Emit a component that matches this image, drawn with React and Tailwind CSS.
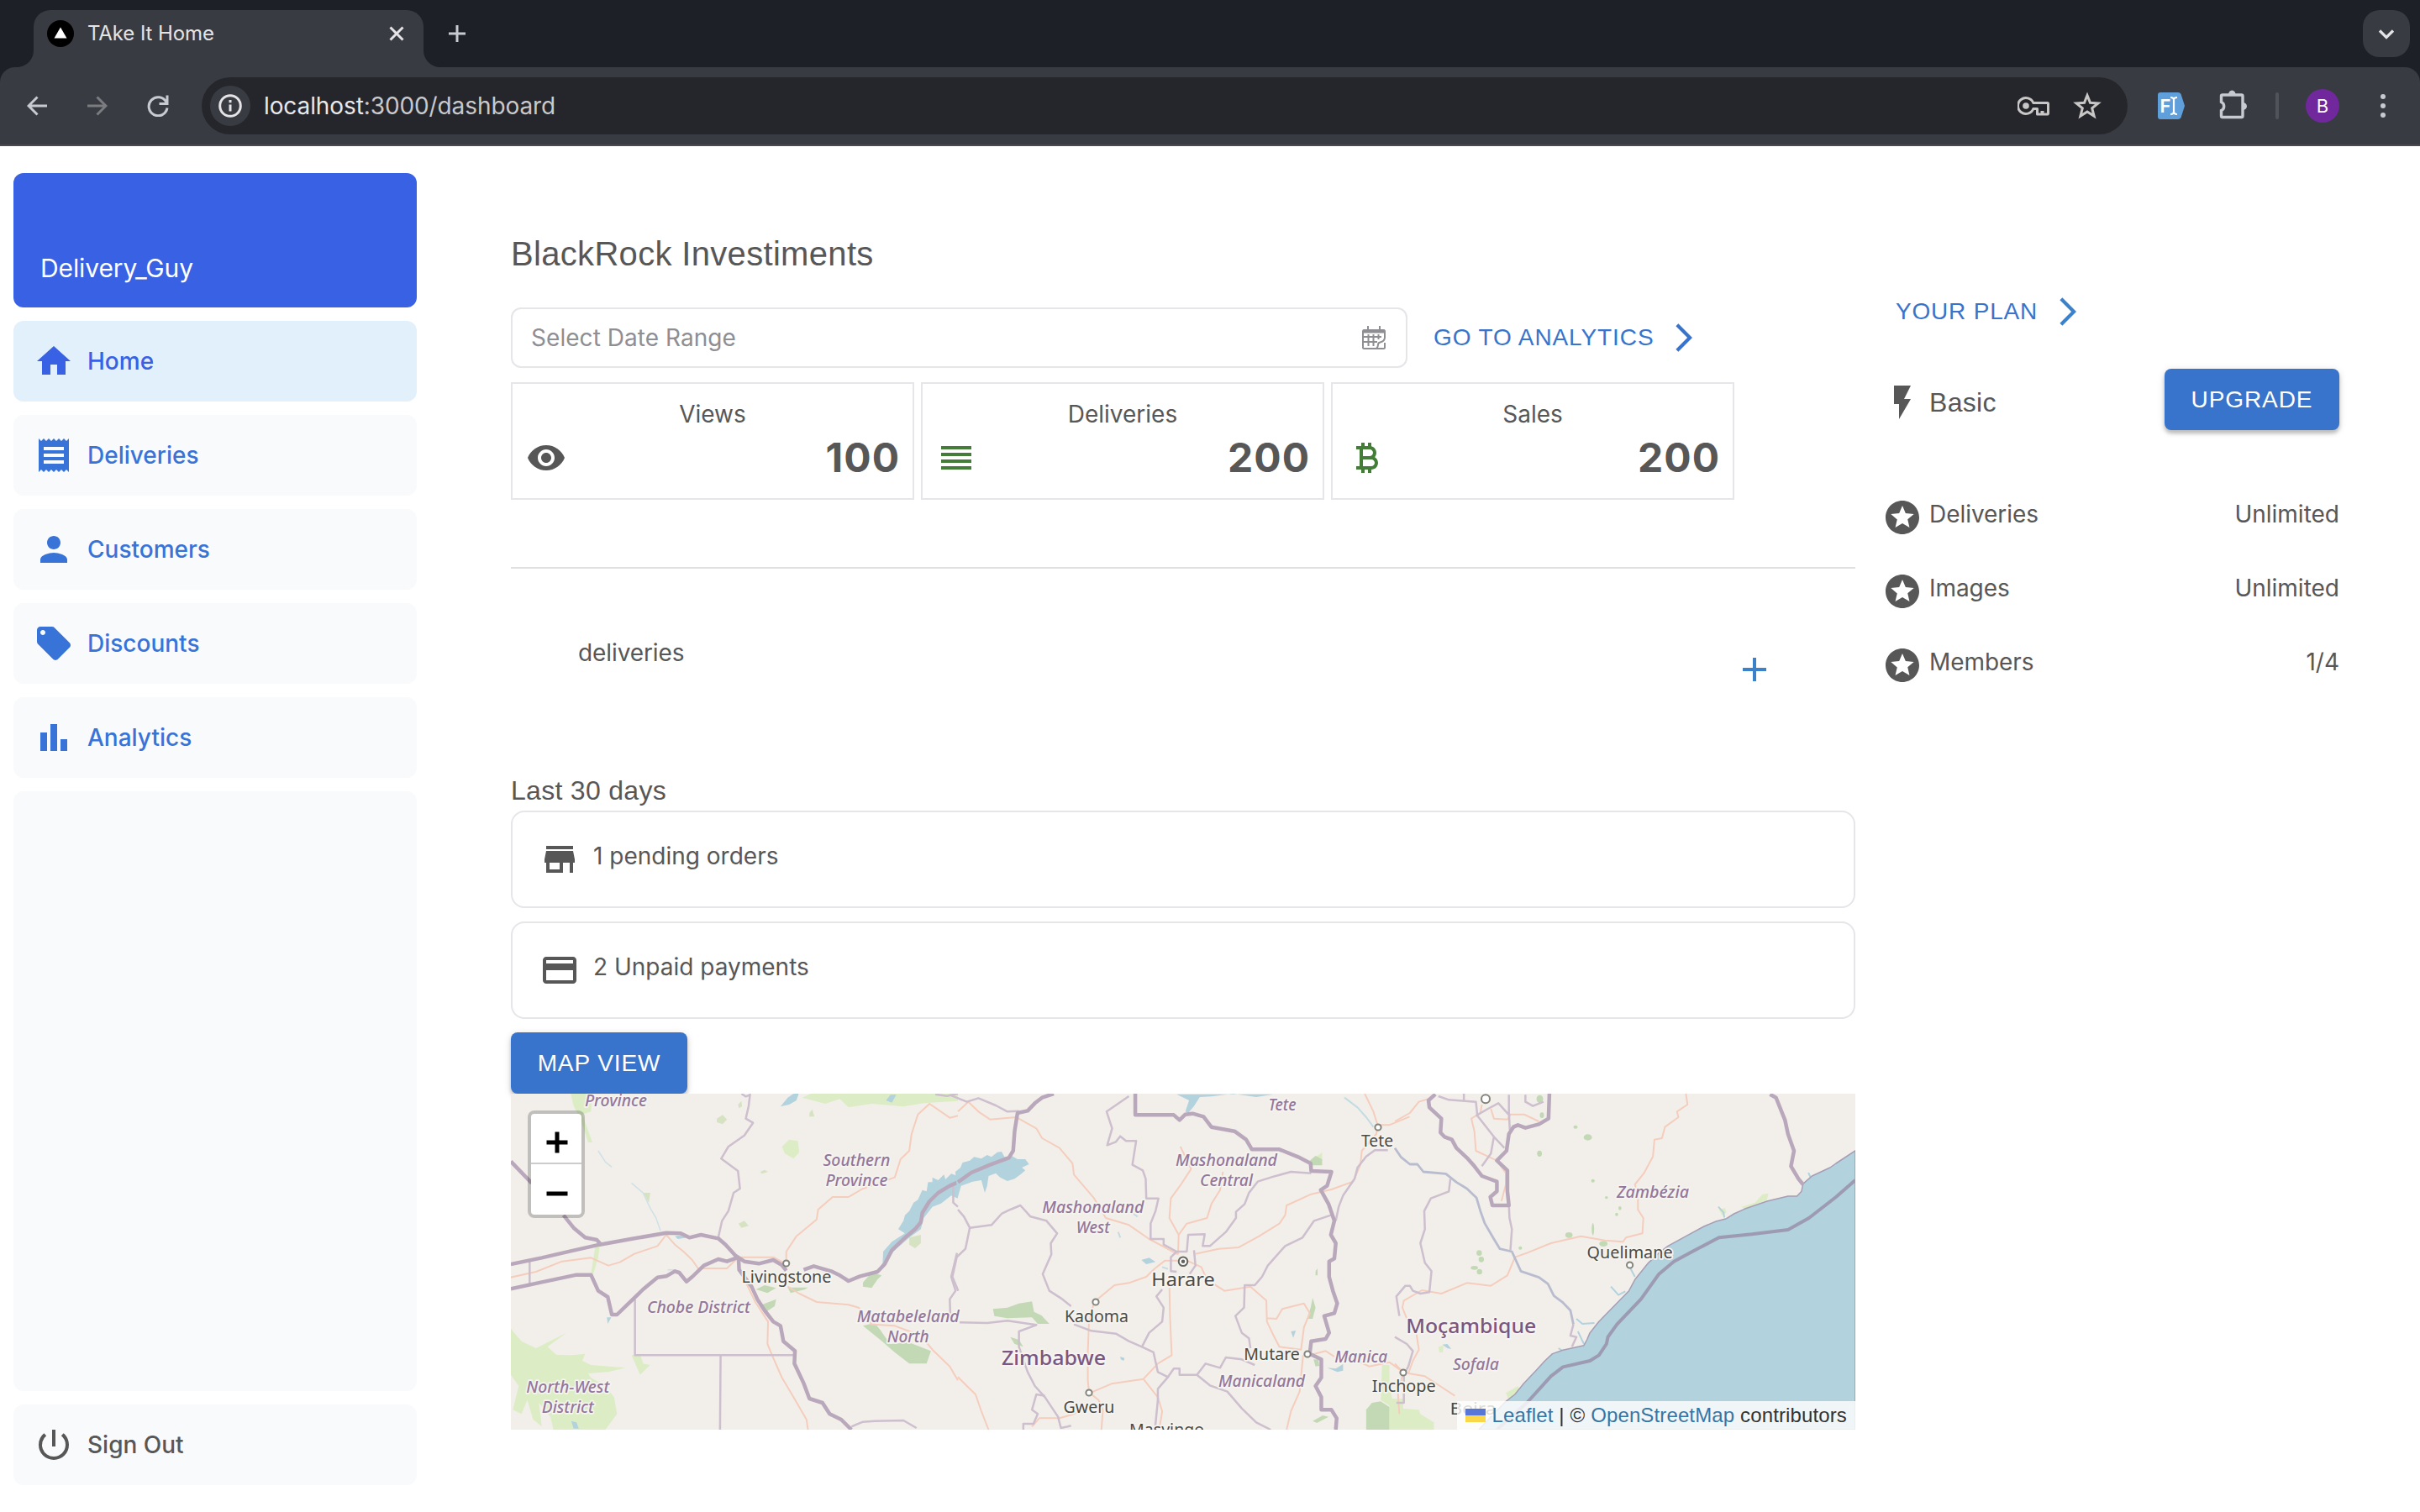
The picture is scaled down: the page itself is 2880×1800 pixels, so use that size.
import React from "react";
import {
  MdAdd,
  MdArrowForwardIos,
  MdBarChart,
  MdCreditCard,
  MdCurrencyBitcoin,
  MdFlashOn,
  MdHome,
  MdPerson,
  MdPowerSettingsNew,
  MdReceipt,
  MdReorder,
  MdLocalOffer,
  MdStars,
  MdStore,
  MdVisibility,
} from "react-icons/md";

const navItems = [
  { label: "Home", Icon: MdHome, active: true },
  { label: "Deliveries", Icon: MdReceipt },
  { label: "Customers", Icon: MdPerson },
  { label: "Discounts", Icon: MdLocalOffer },
  { label: "Analytics", Icon: MdBarChart },
];

const stats = [
  { label: "Views", value: "100", Icon: MdVisibility, color: "text-[#575757]" },
  { label: "Deliveries", value: "200", Icon: MdReorder, color: "text-[#447d38]" },
  { label: "Sales", value: "200", Icon: MdCurrencyBitcoin, color: "text-[#447d38]" },
];

const features = [
  { label: "Deliveries", value: "Unlimited" },
  { label: "Images", value: "Unlimited" },
  { label: "Members", value: "1/4" },
];

/* ---------- Browser chrome ---------- */

function BrowserChrome() {
  return (
    <header className="h-[174px] bg-[#1e2028]">
      <div className="flex h-20 items-center justify-between pr-3">
        <div className="flex h-20 items-end">
          <svg className="ml-5 h-5 w-5 text-[#393b42]" viewBox="0 0 20 20" fill="currentColor">
            <path d="M20 0v20H0C11 20 20 11 20 0z" />
          </svg>
          <div className="flex h-[68px] w-[464px] items-center rounded-t-[20px] bg-[#393b42] pb-3 pl-4 pr-5">
            <svg className="h-8 w-8" viewBox="0 0 32 32">
              <circle cx="16" cy="16" r="16" fill="#000" />
              <path d="M16 8.500l7.500 13h-15z" fill="#fff" />
            </svg>
            <span className="ml-4 text-2xl leading-8 tracking-[-0.1px] text-[#e4e4e6]">TAke It Home</span>
            <svg className="ml-auto mr-[3px] h-[18px] w-[18px]" viewBox="0 0 18 18" fill="none" stroke="#e4e4e6" strokeWidth="3">
              <path d="M1.500 1.500l15 15M16.500 1.500l-15 15" />
            </svg>
          </div>
          <svg className="h-5 w-5 text-[#393b42]" viewBox="0 0 20 20" fill="currentColor">
            <path d="M0 0v20h20C9 20 0 11 0 0z" />
          </svg>
          <svg className="mb-[30px] ml-[10px] h-5 w-5" viewBox="0 0 20 20" fill="none" stroke="#c7cad1" strokeWidth="3">
            <path d="M10 0v20M0 10h20" />
          </svg>
        </div>
        <div className="flex h-14 w-14 items-center justify-center rounded-[20px] bg-[#393b42]">
          <svg className="h-6 w-6" viewBox="0 0 24 24" fill="none" stroke="#e4e4e6" strokeWidth="3.200">
            <path d="M4 8.500l8 8 8-8" />
          </svg>
        </div>
      </div>
      <div className="flex h-[94px] items-center rounded-t-[18px] border-b-2 border-[#4a4a4c] bg-[#393b42] pl-8">
        <svg className="h-6 w-6" viewBox="0 0 24 24" fill="none" stroke="#c7cad1" strokeWidth="3">
          <path d="M24.500 12H2.500M12.500 1.500L2 12l10.500 10.500" />
        </svg>
        <svg className="ml-12 h-6 w-6" viewBox="0 0 24 24" fill="none" stroke="#7b7c80" strokeWidth="3">
          <path d="M-.5 12h22M11.500 1.500L22 12 11.500 22.500" />
        </svg>
        <svg className="ml-[47px] h-[26px] w-[26px]" viewBox="0 0 26 26" fill="none" stroke="#c7cad1" strokeWidth="3">
          <path d="M22.800 8.500A11 11 0 1 0 24 15.500M24 .5v10h-9.500" />
        </svg>
        <div className="ml-[39px] flex h-[68px] w-[2292px] items-center rounded-full bg-[#25262b] pl-[10px] pr-[30px]">
          <div className="flex h-12 w-12 items-center justify-center rounded-full bg-[#393b42]">
            <svg className="h-7 w-7" viewBox="0 0 28 28" fill="none" stroke="#e4e4e6" strokeWidth="3">
              <circle cx="14" cy="14" r="12.300" />
              <path d="M14 12.500v8M14 7v3.200" />
            </svg>
          </div>
          <span className="ml-4 text-[28px] leading-9 tracking-[-0.1px] text-[#c9c9cb]">
            <span className="text-[#e8e8ea]">localhost</span>:3000/dashboard
          </span>
          <svg className="ml-auto h-6 w-[38px]" viewBox="0 0 38 24" fill="none" stroke="#c9c7c5" strokeWidth="3">
            <path d="M18.800 8.500A9.500 9.500 0 1 0 18.800 15.500H23.500V22H35.300A1 1 0 0 0 36.500 21V9.500A1 1 0 0 0 35.500 8.500z" strokeLinejoin="round" />
            <path d="M29.500 22v-4" strokeWidth="4" />
            <circle cx="10" cy="12" r="3.800" fill="#c9c7c5" stroke="none" />
          </svg>
          <svg className="ml-[27px] h-9 w-9" viewBox="0 0 36 36" fill="none" stroke="#c9c7c5" strokeWidth="3">
            <path d="M18 5.500l3.500 8.700 9.500.7-7.300 6 2.400 9.200L18 25l-8.100 5.100 2.400-9.200-7.300-6 9.500-.7z" />
          </svg>
        </div>
        <svg className="ml-9 h-8 w-8" viewBox="0 0 32 32">
          <path d="M3 0h21a4 4 0 0 1 3.500 2L32 16l-4.500 14a4 4 0 0 1-3.500 2H3a3 3 0 0 1-3-3V3a3 3 0 0 1 3-3z" fill="#5f9fdb" />
          <text x="2.500" y="24" fill="#fff" fontSize="22" fontWeight="600" fontFamily="Inter, sans-serif">F</text>
          <path d="M15 6c3 0 4 1 4 3v14c0 2-1 3-4 3M23 6c-3 0-4 1-4 3M19 23c0 2 1 3 4 3" fill="none" stroke="#fff" strokeWidth="2.200" />
        </svg>
        <svg className="mb-1 ml-10 h-[38px] w-9" viewBox="0 0 36 38" fill="none" stroke="#c7cad1" strokeWidth="3.400">
          <path d="M5 8h22.500a1.500 1.500 0 0 1 1.500 1.500V33a1.500 1.500 0 0 1-1.500 1.500H5A1.500 1.500 0 0 1 3.500 33v-6.500a5.500 5.500 0 0 0 0-10V9.500A1.500 1.500 0 0 1 5 8z" />
          <path d="M12 8a4.300 5.500 0 0 1 8.600 0zM29 17a5 4.500 0 0 1 0 9z" fill="#c7cad1" stroke="none" />
        </svg>
        <div className="ml-8 h-8 w-1 rounded-full bg-[#51535b]" />
        <div className="ml-8 flex h-10 w-10 items-center justify-center rounded-full bg-[#70289c] text-[22px] leading-none text-white">B</div>
        <svg className="ml-12 h-8 w-2" viewBox="0 0 8 32" fill="#c7cad1">
          <circle cx="4" cy="5" r="3" />
          <circle cx="4" cy="16" r="3" />
          <circle cx="4" cy="27" r="3" />
        </svg>
      </div>
    </header>
  );
}

/* ---------- Sidebar ---------- */

function Sidebar() {
  return (
    <aside className="flex h-[1562px] w-[480px] shrink-0 flex-col gap-4">
      <div className="flex h-40 items-end rounded-xl bg-[#3861e4] px-8 pb-[25px] text-[30px] leading-[44px] tracking-[-0.1px] text-white">
        Delivery_Guy
      </div>
      {navItems.map(({ label, Icon, active }) => (
        <a
          key={label}
          className={
            active
              ? "flex h-24 items-center gap-4 rounded-xl bg-[#e2f0fc] px-6 text-[28px] font-medium text-[#3861e4]"
              : "flex h-24 items-center gap-4 rounded-xl bg-[#f9fafc] px-6 text-[28px] font-medium text-[#3874d8]"
          }
        >
          <Icon className="h-12 w-12" />
          {label}
        </a>
      ))}
      <div className="grow rounded-xl bg-[#f9fafc]" />
      <a className="flex h-24 items-center gap-4 rounded-xl bg-[#f9fafc] px-6 text-[28px] font-medium text-[#575757]">
        <MdPowerSettingsNew className="h-12 w-12" />
        Sign Out
      </a>
    </aside>
  );
}

/* ---------- Main column ---------- */

function CalendarIcon() {
  return (
    <svg className="h-7 w-7" viewBox="0 0 28 28" fill="none" stroke="#8e8e93" strokeWidth="2">
      <path d="M27 14V6.500A1.500 1.500 0 0 0 25.500 5h-23A1.500 1.500 0 0 0 1 6.500v19A1.500 1.500 0 0 0 2.500 27h23a1.500 1.500 0 0 0 1.500-1.500V20" />
      <path d="M7 0v6M21 0v6" />
      <path d="M1 6.500h26" strokeWidth="4" />
      <path d="M1 13h22M1 19h17M7.500 10v14M13.500 10v14M19.500 10v6" />
      <path d="M27 13.500c0 4-3 5.500-5.500 6-2 .4-2.500 1.500-2.500 3 0 2-1 3.500-2 4.500" />
    </svg>
  );
}

function StatCard({ label, value, Icon, color }) {
  return (
    <div className="h-[140px] w-[480px] border-2 border-[#e5e5ea] px-4 pt-4">
      <div className="text-center text-[28px] leading-10">{label}</div>
      <div className="flex h-[62px] items-center justify-between pt-px">
        <Icon className={`h-12 w-12 ${color}`} />
        <span className="-mr-px text-5xl font-bold leading-[54px] tracking-[1px]">{value}</span>
      </div>
    </div>
  );
}

function NoticeRow({ Icon, children }) {
  return (
    <div className="flex h-[116px] items-center gap-4 rounded-2xl border-2 border-[#e5e5ea] px-8">
      <Icon className="h-12 w-12" />
      <span className="mb-[9px] text-[28px] leading-10">{children}</span>
    </div>
  );
}

const wideBordersA = [
  "M23 645L130 622L230 598L330 575L450 553L560 533L610 535L640 550L680 540L740 553L765 575L800 615L830 635L880 643L930 630L960 648L975 668",
  "M1035 665L1070 652L1130 670L1160 685L1190 705L1230 688L1290 672L1315 645L1340 595L1380 555L1420 520L1440 495L1445 462L1470 420L1500 390L1540 365L1568 352",
  "M23 278L95 355M205 470L240 515L280 550L320 558L335 575",
  "M23 733L130 709L250 683H300L325 740L358 762L372 825L390 825L440 775L480 735L530 692L560 688L590 670L605 675L630 707L650 690L690 650L740 627L770 635L810 620",
  "M810 625L812 665L855 725L875 770L900 810L930 850L955 865L965 920L1005 955L1003 1000L1035 1070L1055 1125L1100 1140L1125 1180L1165 1200L1200 1236",
];
const thinBordersA = [
  "M850 36L845 80L835 125L860 140L830 185L775 225L750 268L808 312L815 375L793 390L775 455L753 490L740 550",
  "M452 770V970H1005M748 970L746 1236M88 635V715",
  "M1552 365V425L1568 440M1565 605L1545 690L1560 740L1540 770L1542 830",
  "M1200 1225L1240 1208L1280 1205L1380 1203L1425 1230",
  "M820 36L835 46L850 40M1490 38L1530 44L1568 36",
];
const roadsA = [
  "M23 692L110 672L200 635L300 622L360 650L400 638L450 608L530 580L560 540L590 575L620 600L650 630L670 660H770L805 625",
  "M810 620H930L975 645V600L1010 545L1045 515L1080 485L1085 450L1135 405L1190 405L1240 375L1350 335L1370 270L1400 240L1408 180L1430 110L1470 72L1540 122L1568 115",
  "M980 725L1020 750L1080 780L1190 790L1225 800L1270 860L1350 865L1440 900L1480 950L1540 1010L1568 1060",
  "M812 660L868 780L912 850L910 930L930 980L960 1050L1000 1120L1045 1200L1050 1236",
];
const lightGreenA = [
  "M23 875L60 920L110 945L215 890L150 940L180 968L230 970L280 965L270 990L300 1005L420 1015L360 1030L290 1035L300 1050L350 1080L380 1120L390 1180L350 1236H170L160 1190L120 1140L130 1225L100 1200L80 1130L60 1180L30 1165L50 1080L23 1040Z",
  "M230 36H305L300 100L270 110L305 210L290 210L265 130L240 80Z",
  "M1030 50L1060 36H1568V62L1450 70L1380 82L1270 72L1190 85L1160 55L1110 72Z",
  "M960 225L985 200L1015 205L1020 245L1000 268L970 250Z",
  "M315 580L330 580L325 620L308 680L300 680Z",
  "M440 970L470 965L480 1000L505 1005L470 1040Z",
];
const darkGreenA = [
  "M870 735L900 720L940 730L910 748Z",
  "M890 790L940 770L935 795L905 815Z",
  "M980 728L1050 728L1040 735L990 748Z",
  "M1240 725L1240 710L1270 675L1305 685L1290 700L1270 730Z",
  "M1240 865L1280 855L1300 880L1320 910L1335 930L1400 925L1475 955L1460 1000H1400L1350 960L1300 915L1270 890Z",
];
const paleGreenA = [
  "M1400 550L1440 540V570L1420 588L1400 575Z",
  "M480 390H505L500 425Z",
  "M735 125L755 112L770 128L755 145L735 138Z",
  "M810 500L830 490L845 508L820 515Z",
  "M1055 105L1065 92L1072 118H1055Z",
  "M885 315L900 308L912 315L890 322Z",
  "M808 75L820 62L822 82L812 88Z",
];
const waterA = [
  "M1290 672L1308 640L1310 600L1340 565L1385 535L1362 520L1380 490L1385 470L1400 455L1415 425L1430 415L1445 380L1460 385L1465 352L1480 352L1480 335L1500 345L1520 325L1525 342L1545 322L1568 330V410L1545 400L1510 428L1480 440L1450 480L1440 520L1400 550L1345 600L1318 645Z",
  "M955 82L980 50L1000 36H1018L1010 60L985 75Z",
  "M1320 60L1335 40H1355L1340 68Z",
  "M590 545L620 540L635 550L600 555Z",
  "M355 835L370 835L358 858Z",
  "M232 1205L250 1210L258 1232H240Z",
];

const wideBordersB = [
  "M29 352L75 318L140 290L205 265L220 240L225 170L235 105L270 97L295 70L320 50L360 36",
  "M642 36V112H775L795 130L815 110L840 107L878 118L905 155L985 170L1025 200L1045 235H1140L1205 262L1248 285L1250 312L1320 315L1305 365L1283 380L1310 430L1320 460L1330 490L1318 540L1335 570L1330 625L1312 635V690L1325 740L1340 785L1330 820L1295 830L1312 890L1300 912L1250 920L1245 965L1285 985V1050L1265 1080L1285 1120V1165H1320L1338 1195L1335 1236",
];
const thinBordersB = [
  "M620 45L543 100L562 160L545 220L575 208L590 188L610 205H645L632 290L668 310L678 340L680 410H722L712 455L695 500V555H740L740 575L785 600H820L825 540L882 538L875 580H900L955 530L990 480V458L1020 430L1035 390L1065 350L1120 332L1180 315L1250 320",
  "M0 40L60 65L100 52L160 78L200 100L240 98",
  "M29 450L50 475L70 515L55 590L25 620L10 690L30 740",
  "M70 515L145 505L180 465L210 450L245 435L280 475L335 490L372 535L350 570L352 610L322 680L345 740L390 770L420 795",
  "M35 853L130 855L200 847L300 862L240 885L240 940L270 1030L295 1080L330 1120L375 1190L385 1230L420 1222",
  "M430 860L490 883L575 893L620 920L665 940L705 960L720 1030L755 1048L720 1090L720 1130L710 1236",
  "M665 940L690 890L735 850L740 800L715 760L735 735",
  "M755 1048L775 1018H795V1040H855L885 1000L935 1015L955 978L1010 985L1055 1005",
  "M1318 470L1260 490L1220 550L1160 580L1100 650L1080 690L1055 720H1020L1018 800L988 830L1010 890L1035 910L1040 945",
  "M855 1040L900 1078L960 1100L1010 1160L1060 1210L1110 1236",
  "M1335 490L1345 440L1360 400L1400 340L1410 300L1440 260L1470 238H1515",
  "M785 600L765 620V670L785 672M845 595L850 650L830 680",
  "M330 1115L300 1110L285 1165L305 1180L290 1215H255V1236",
];
const roadsB = [
  "M29 100L65 65L100 100L140 128L230 120L300 160L320 195L380 230L425 285L430 325L500 410L540 480L620 505L690 555L790 610",
  "M808 632H745L710 660L680 690L620 712L570 720L500 780L482 850L478 960V1060L482 1100",
  "M798 225L835 305L800 360L765 410L760 480L792 540L790 610",
  "M945 315L935 380L905 430L890 480L820 500L792 540",
  "M850 608L930 590L1000 585L1070 545L1140 500L1160 470L1165 435L1250 395L1320 378L1395 350L1420 290L1425 240L1475 180L1480 150L1465 100L1435 36",
  "M820 632L870 655L890 700L950 740L1040 725L1095 775L1097 850L1120 900L1140 940L1215 950L1225 870L1245 820L1225 785L1150 805L1130 840L1097 838",
  "M760 730L762 830L768 970L720 1000L670 1055L560 1072L485 1105L515 1130L530 1165L525 1236",
  "M670 1055L720 1120L735 1170L725 1236M1222 970L1210 1100L1180 1170L1165 1236",
  "M29 1048L60 1080L90 1110L110 1170L135 1236M480 1150L430 1180L380 1195H310L285 1225",
  "M1245 970L1300 955L1330 975M1410 990L1450 1010L1520 995L1568 1030M1480 148H1520L1590 118",
];
const lightGreenB = ["M1495 1005H1520V1080L1530 1125H1568V1236H1520V1150L1490 1130Z", "M1265 262L1288 246V270Z"];
const darkGreenB = [
  "M150 805L200 800L240 785L285 778L292 815L318 828L345 858H305L285 835L200 838L155 830Z",
  "M210 905L240 915L255 940L225 930Z",
  "M1245 275L1265 258L1288 270V292H1250Z",
  "M1248 800L1255 765L1265 800L1255 840H1235Z",
  "M1440 1236V1165L1460 1140L1490 1135L1520 1155V1236Z",
  "M1255 1205L1290 1185L1310 1190L1270 1212Z",
  "M1265 670L1272 660V685H1265ZM1258 985H1275L1278 1008L1265 1010Z",
];
const waterB = [
  "M20 315L38 300L45 282L70 275L85 262L110 268L130 255L145 262L165 245L180 243L190 262L215 258L235 270L262 270L275 288L250 300L262 310L245 325L225 340L200 348L175 335L160 320L135 330L130 365L122 390L110 345L80 350L40 365L29 405Z",
  "M663 630L690 622L712 637L680 645Z",
  "M785 38H1120L1060 48L980 36L905 46L865 48L845 80L825 105L815 100L828 60Z",
  "M1305 1015L1335 1018L1360 1002V1025L1340 1030Z",
  "M1180 885L1197 882L1188 908Z",
  "M590 975L605 980L602 990L592 985Z",
];

const seaC =
  "M1534 240L1470 285L1450 300L1390 330L1360 358L1355 385L1340 402L1310 402L1240 420L1165 448L1130 465L1105 482L1070 492L1030 510L970 545L910 580L880 605L845 640L800 700L780 740L730 795L680 850L650 890L640 915L630 935L560 952L525 965L500 990L470 1025L430 1070L400 1110L370 1135L320 1190L280 1236H1534Z";
const seaBorderC =
  "M1534 345L1470 405L1380 480L1310 522L1190 538L1080 550L1000 595L930 635L880 680L850 725L820 770L740 860L710 905L705 930L680 970L650 990L560 1012L520 1045L440 1140L340 1236";
const wideBordersC = [
  "M135 38L112 60L115 85L155 125L152 175L165 190L190 200L205 230L240 265L265 295L290 330L340 350V385L318 405L325 435H380L375 385V310L340 275L372 240L380 180L395 155L410 148L435 158L480 145L512 125L515 36",
  "M1250 38L1270 50L1300 130L1310 180L1330 240L1320 295L1345 340L1360 360",
];
const riverC =
  "M0 230L20 262L50 288L75 288L95 315L170 322L205 352L240 375L272 408L285 455L300 500L330 555L350 590L390 600L420 670L480 692L510 715L530 758L560 782L585 810L595 860";
const thinBordersC = [
  "M380 435L382 480L390 520L385 595M595 860L585 900L605 905L590 940",
  "M185 340L180 385L120 410L98 455L100 520L85 570L100 640L122 670L115 745L85 750L60 740L50 722H35L5 760L15 830",
  "M0 905L40 930L60 955L45 1010L30 1040V1140H5",
  "M145 45L180 58L270 65L275 115L330 190L365 230M380 40V100L383 165M330 190L320 250L290 295M435 40V65L460 80L495 65M270 115L310 90L345 70L383 115M230 60V36",
];
const roadsC = [
  "M0 135L50 105L80 65L110 55",
  "M970 36L975 75L940 100L945 120L900 155L890 195L865 200L860 260L830 320L800 360L810 400V450L828 480L825 535L770 550L760 565L700 560L620 545L520 570L440 605L400 620L375 685L320 722L240 712L155 750L90 738L30 775L25 800L40 840L70 880L80 950L60 990L45 1035L100 1045L150 1080L200 1115",
  "M290 75L285 105L255 125L265 170L270 240L340 275L370 320L370 360L355 420",
  "M320 90L330 125L375 128L385 110H430L480 135M0 1000L28 1032L10 1100L15 1180",
];
const darkGreenC = [
  [643, 192, 14, 11], [660, 520, 4, 22], [580, 541, 12, 10], [695, 572, 14, 10], [602, 155, 7, 6],
  [482, 250, 8, 11], [281, 605, 9, 10], [288, 628, 9, 10], [265, 658, 12, 7], [282, 672, 9, 10],
  [660, 347, 6, 6], [750, 445, 5, 7], [739, 467, 5, 6], [705, 407, 5, 5], [483, 55, 11, 14], [490, 113, 7, 10], [418, 587, 6, 6],
];
const lightGreenC = [
  "M1155 440L1200 425L1225 395L1245 392L1240 415L1165 448Z",
  "M370 1105L410 1080L415 1095L380 1130Z",
  "M0 1236V1185L20 1160L80 1165L85 1180L130 1210V1236Z",
  "M1080 450L1100 445L1105 460L1090 470Z",
  "M145 940L162 935L160 960H148Z",
];
const streamsC = "M1378 318L1385 335L1380 345M1078 440L1095 460L1098 478M785 660L800 690M720 725L745 755L768 742M605 840L625 858L665 855M610 885L630 930M545 945L560 955";

const labels = [
  ["Province", 124.9, 14.7, 74, "i"], ["Southern", 411.4, 85.7, 80, "i"], ["Province", 411.4, 109.7, 74, "i"],
  ["Livingstone", 328, 225, 107, "c"], ["Chobe District", 223.4, 261, 123, "i"], ["Matabeleland", 472.7, 271.5, 122, "i"],
  ["North", 472.7, 295.5, 50, "i"], ["North-West", 67.8, 355.7, 99, "i"], ["District", 67.8, 379.7, 62, "i"],
  ["Tete", 918, 19.7, 33, "i"], ["Tete", 1031, 63, 38, "c"], ["Mashonaland", 851.5, 86.3, 121, "i"], ["Central", 851.5, 110.3, 63, "i"],
  ["Mashonaland", 692.8, 141.7, 121, "i"], ["West", 692.8, 165.7, 40, "i"], ["Harare", 800, 228.7, 75.5, "h"], ["Kadoma", 697, 271.7, 76, "c"],
  ["Zimbabwe", 646, 323, 124, "n"], ["Gweru", 688, 379.7, 61, "c"], ["Masvingo", 780.6, 407, 89, "c"], ["Mutare", 905.6, 316.7, 66.5, "c"],
  ["Manica", 1011.7, 319.7, 63, "i"], ["Manicaland", 893.6, 349, 103, "i"], ["Zambézia", 1359, 124.3, 86, "i"],
  ["Quelimane", 1331.6, 196, 102, "c"], ["Moçambique", 1142.7, 284.7, 155, "n"], ["Sofala", 1148.4, 328.7, 55, "i"],
  ["Inchope", 1062.7, 355.3, 76, "c"], ["Beira", 1145, 382, 55, "c"],
];
const labelStyles = {
  i: { fill: "#93779a", fontSize: 20.500, fontStyle: "italic", fontWeight: 500 },
  c: { fill: "#4a4a46", fontSize: 20 },
  h: { fill: "#4a4a46", fontSize: 22 },
  n: { fill: "#7a5680", fontSize: 23, fontWeight: 500 },
};
const towns = [[327.700, 202], [696, 248], [688, 356], [1032, 40], [948, 310], [1062, 332], [1331.600, 204]];

function Lines({ paths, color, width }) {
  return (
    <g fill="none" stroke={color} strokeWidth={width} strokeLinejoin="round">
      {paths.map((d) => (
        <path key={d} d={d} vectorEffect="non-scaling-stroke" />
      ))}
    </g>
  );
}

function Areas({ paths, color }) {
  return (
    <g fill={color}>
      {paths.map((d) => (
        <path key={d} d={d} />
      ))}
    </g>
  );
}

const WIDE = "#b9a8bb";
const THIN = "#cdbfce";
const ROAD = "#f5cdbd";
const LIGHT = "#dcedc6";
const DARK = "#c3d9b5";
const WATER = "#b2d2dd";

function MapDrawing() {
  return (
    <svg className="block h-[400px] w-[1600px]" viewBox="0 0 1600 400">
      <rect width="1600" height="400" fill="#f2efea" />
      <g transform="translate(-8 -12) scale(0.34435 0.33333)">
        <Areas paths={lightGreenA} color={LIGHT} />
        <Areas paths={darkGreenA} color={DARK} />
        <Areas paths={paleGreenA} color="#d5e3c2" />
        <Areas paths={waterA} color={WATER} />
        <Lines paths={["M325 240L350 280L372 298M440 355L480 390L505 445L525 480L540 525M565 665L590 665"]} color="#cfe0e6" width={1.500} />
        <Lines paths={roadsA} color={ROAD} width={2} />
        <Lines paths={thinBordersA} color={THIN} width={2.500} />
        <Lines paths={wideBordersA} color={WIDE} width={4.500} />
      </g>
      <g transform="translate(522 -12) scale(0.34435 0.33333)">
        <Areas paths={lightGreenB} color={LIGHT} />
        <Areas paths={darkGreenB} color={DARK} />
        <Areas paths={waterB} color={WATER} />
        <Lines paths={["M1365 50L1410 85L1440 120L1465 155M735 655L755 662M635 465L650 475M583 530L590 550"]} color="#c3dbe2" width={2} />
        <Lines paths={roadsB} color={ROAD} width={2} />
        <Lines paths={thinBordersB} color={THIN} width={2.500} />
        <Lines paths={wideBordersB} color={WIDE} width={4.500} />
      </g>
      <g transform="translate(1052 -12) scale(0.35714 0.33333)">
        <Areas paths={lightGreenC} color={LIGHT} />
        <g fill={DARK}>
          {darkGreenC.map(([cx, cy, rx, ry]) => (
            <ellipse key={`${cx}-${cy}`} cx={cx} cy={cy} rx={rx} ry={ry} />
          ))}
        </g>
        <Areas paths={[seaC, "M158 932L175 930L188 948L175 945Z"]} color={WATER} />
        <Lines paths={[streamsC]} color={WATER} width={2} />
        <Lines paths={roadsC} color={ROAD} width={2} />
        <Lines paths={thinBordersC} color={THIN} width={2.500} />
        <Lines paths={[riverC]} color="#b9bccf" width={2.800} />
        <Lines paths={[seaC]} color="#a79db4" width={1.500} />
        <Lines paths={wideBordersC} color={WIDE} width={4.500} />
        <Lines paths={[seaBorderC]} color="#9d9bb3" width={4} />
      </g>
      <g fill="#fff" stroke="#83847c" strokeWidth="2">
        {towns.map(([x, y]) => (
          <circle key={x} cx={x} cy={y} r="3.600" />
        ))}
        <circle cx="1160" cy="6.300" r="5" />
        <circle cx="800" cy="199.700" r="5.300" stroke="#63645c" />
      </g>
      <circle cx="800" cy="199.700" r="2.300" fill="#63645c" />
      <g fontFamily="'Noto Sans', sans-serif" textAnchor="middle" stroke="#f6f4f0" strokeWidth="3.500" strokeLinejoin="round" paintOrder="stroke">
        {labels.map(([text, x, y, w, kind]) => (
          <text key={`${text}${x}${y}`} x={x} y={y} textLength={w} lengthAdjust="spacingAndGlyphs" {...labelStyles[kind]}>
            {text}
          </text>
        ))}
      </g>
    </svg>
  );
}

function MapPanel() {
  return (
    <div className="relative h-[400px] w-[1600px] overflow-hidden font-['Liberation_Sans',sans-serif]">
      <MapDrawing />
      <div className="absolute left-5 top-5 flex w-[68px] flex-col rounded-lg border-4 border-black/20 bg-white bg-clip-padding">
        <div className="flex h-[60px] items-center justify-center border-b-2 border-[#ccc] pl-0.5 pt-2.5">
          <svg className="h-[26px] w-[26px]" viewBox="0 0 26 26" stroke="#000" strokeWidth="5">
            <path d="M13 .5v25M.5 13h25" />
          </svg>
        </div>
        <div className="flex h-[60px] items-center justify-center pl-0.5 pt-2.5">
          <svg className="h-[26px] w-[26px]" viewBox="0 0 26 26" stroke="#000" strokeWidth="5">
            <path d="M.5 13h25" />
          </svg>
        </div>
      </div>
      <div className="absolute bottom-0 right-0 flex h-[34px] items-center whitespace-pre bg-white/80 pl-2.5 pr-2.5 text-2xl leading-[34px] tracking-[0.13px] text-[#333]">
        <svg className="mr-2 h-4 w-6" viewBox="0 0 24 16">
          <path d="M0 0h24v8H0z" fill="#5677d8" />
          <path d="M0 8h24v8H0z" fill="#f9d748" />
        </svg>
        <span className="text-[#3676a6]">Leaflet</span>
        {" | © "}
        <span className="text-[#3676a6]">OpenStreetMap</span>
        {" contributors"}
      </div>
    </div>
  );
}

function Main() {
  return (
    <main className="ml-28 w-[1600px] shrink-0 pt-20">
      <h1 className="font-['Liberation_Sans',sans-serif] text-[40px] leading-[64px] tracking-[0.32px]">BlackRock Investiments</h1>
      <div className="mt-8 flex h-[72px] items-center">
        <div className="flex h-[72px] w-[1067px] items-center justify-between rounded-xl border-2 border-[#e5e5ea] pl-[22px] pr-6 text-[28px] tracking-[0.05px] text-[#8e8e93]">
          Select Date Range
          <CalendarIcon />
        </div>
        <a className="ml-[31px] flex items-center font-['Liberation_Sans',sans-serif] text-[28px] tracking-[0.9px] text-[#3874cb]">
          GO TO ANALYTICS
          <MdArrowForwardIos className="ml-4 h-10 w-10" />
        </a>
      </div>
      <div className="mt-[17px] flex gap-2">
        {stats.map((s) => (
          <StatCard key={s.label} {...s} />
        ))}
      </div>
      <div className="mt-20 flex h-[242px] justify-between border-t-2 border-[#e0e0e0] pl-20 pr-24 pt-20">
        <span className="text-[28px] leading-10 tracking-[-0.1px]">deliveries</span>
        <MdAdd className="mt-4 h-12 w-12 text-[#3b82cb]" />
      </div>
      <h2 className="font-['Liberation_Sans',sans-serif] text-[32px] leading-[48px] tracking-[0.3px]">Last 30 days</h2>
      <div className="flex flex-col gap-4">
        <NoticeRow Icon={MdStore}>1 pending orders</NoticeRow>
        <NoticeRow Icon={MdCreditCard}>2 Unpaid payments</NoticeRow>
        <button className="h-[73px] w-[210px] rounded-lg bg-[#3874cb] font-['Liberation_Sans',sans-serif] text-[28px] tracking-[0.9px] text-white shadow-[0_2px_10px_rgba(0,0,0,0.14),0_4px_4px_rgba(0,0,0,0.18)]">
          MAP VIEW
        </button>
      </div>
      <MapPanel />
    </main>
  );
}

/* ---------- Plan column ---------- */

function Plan() {
  return (
    <section className="ml-8 w-[544px] shrink-0 pt-[145px]">
      <a className="flex h-[72px] items-center pl-4 font-['Liberation_Sans',sans-serif] text-[28px] tracking-[0.8px] text-[#3874cb]">
        YOUR PLAN
        <MdArrowForwardIos className="ml-4 h-10 w-10 text-[#3b82cb]" />
      </a>
      <div className="mt-8 flex h-[73px] items-center font-['Liberation_Sans',sans-serif]">
        <MdFlashOn className="mt-[7px] h-12 w-12" />
        <span className="ml-2 mt-[7px] text-[32px] leading-10 tracking-[0.3px]">Basic</span>
        <button className="ml-auto h-[73px] w-52 rounded-lg bg-[#3874cb] text-[28px] tracking-[0.9px] text-white shadow-[0_2px_10px_rgba(0,0,0,0.14),0_4px_4px_rgba(0,0,0,0.2)]">
          UPGRADE
        </button>
      </div>
      <div className="mt-20 flex flex-col gap-10">
        {features.map((f) => (
          <div key={f.label} className="flex h-12 items-center text-[28px]">
            <MdStars className="h-12 w-12" />
            <span className="mb-2 ml-2 tracking-[-0.05px]">{f.label}</span>
            <span className="mb-2 ml-auto">{f.value}</span>
          </div>
        ))}
      </div>
    </section>
  );
}

export default function App() {
  return (
    <div className="h-[1800px] w-[2880px] overflow-hidden bg-white font-['Inter',sans-serif] text-[#575757]">
      <BrowserChrome />
      <div className="flex pl-4">
        <div className="pt-8">
          <Sidebar />
        </div>
        <div className="flex pt-4">
          <Main />
          <Plan />
        </div>
      </div>
    </div>
  );
}
